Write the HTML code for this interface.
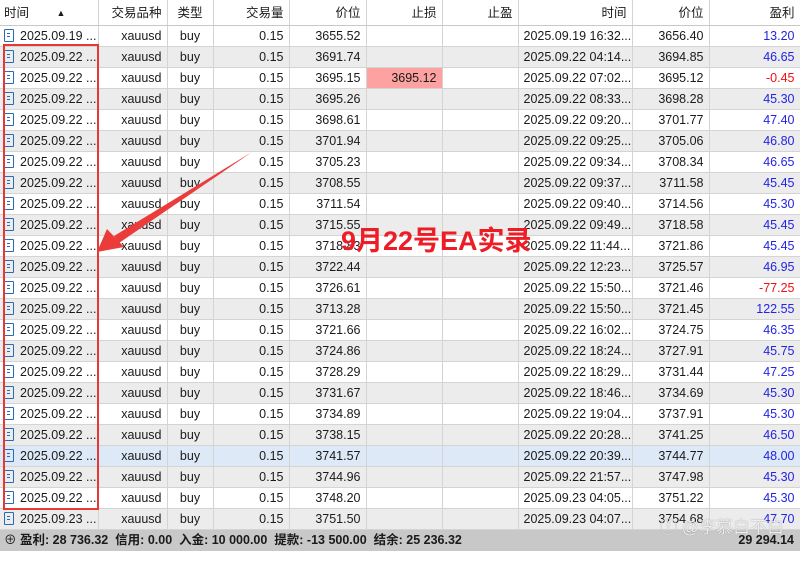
<!DOCTYPE html>
<html><head><meta charset="utf-8"><style>
body{margin:0;width:808px;height:567px;overflow:hidden;background:#fff;font-family:"Liberation Sans","Noto Sans CJK SC",sans-serif;font-size:12.5px;color:#1a1a1a;position:relative}
table{position:absolute;left:0;top:0;border-collapse:collapse;table-layout:fixed;width:800px}
td,th{height:20px;padding:0 5px;border-right:1px solid #d4d4d4;border-bottom:1px solid #d4d4d4;white-space:nowrap;overflow:hidden;text-align:right;font-weight:normal;line-height:20px}
th{height:25px;line-height:22px;background:#fff;border-right:1px solid #d4d4d4;border-bottom:1px solid #c8c8c8}
tr:nth-child(odd) td{background:#ececec}
tr.hl td{background:#dde9f6!important}
td.c{text-align:center}
td.l{text-align:left;padding-left:4px}
.i{display:inline-block;width:8px;height:11px;border:1px solid #2a6bb8;border-radius:1px;vertical-align:middle;margin:-2px 6px 0 0;position:relative}
.i:after{content:"";position:absolute;left:2px;top:3px;width:3px;height:1px;background:#2a6bb8;box-shadow:0 3px 0 #2a6bb8}
.p{color:#2323e6}.n{color:#f01010}
.sl{background:#fda1a1!important}
.foot{position:absolute;left:0;top:530px;width:800px;height:21px;background:#c8c8c8;font-weight:bold;font-size:12.5px;line-height:21px}
.sb{position:absolute;left:800px;top:0;width:8px;height:567px;background:#fff}
</style></head><body>
<table>
<colgroup><col width="98"><col width="69"><col width="46"><col width="76"><col width="77"><col width="76"><col width="76"><col width="114"><col width="77"><col width="91"></colgroup>
<tr><th style="text-align:left;padding-left:4px">时间 <span style="font-size:9px;margin-left:24px;vertical-align:1px">▲</span></th><th>交易品种</th><th style="text-align:center">类型</th><th>交易量</th><th>价位</th><th>止损</th><th>止盈</th><th>时间</th><th>价位</th><th>盈利</th></tr>
<tr><td class="l"><span class="i"></span>2025.09.19 ...</td><td>xauusd</td><td class="c">buy</td><td>0.15</td><td>3655.52</td><td></td><td></td><td>2025.09.19 16:32...</td><td>3656.40</td><td class="p">13.20</td></tr>
<tr><td class="l"><span class="i"></span>2025.09.22 ...</td><td>xauusd</td><td class="c">buy</td><td>0.15</td><td>3691.74</td><td></td><td></td><td>2025.09.22 04:14...</td><td>3694.85</td><td class="p">46.65</td></tr>
<tr><td class="l"><span class="i"></span>2025.09.22 ...</td><td>xauusd</td><td class="c">buy</td><td>0.15</td><td>3695.15</td><td class="sl">3695.12</td><td></td><td>2025.09.22 07:02...</td><td>3695.12</td><td class="n">-0.45</td></tr>
<tr><td class="l"><span class="i"></span>2025.09.22 ...</td><td>xauusd</td><td class="c">buy</td><td>0.15</td><td>3695.26</td><td></td><td></td><td>2025.09.22 08:33...</td><td>3698.28</td><td class="p">45.30</td></tr>
<tr><td class="l"><span class="i"></span>2025.09.22 ...</td><td>xauusd</td><td class="c">buy</td><td>0.15</td><td>3698.61</td><td></td><td></td><td>2025.09.22 09:20...</td><td>3701.77</td><td class="p">47.40</td></tr>
<tr><td class="l"><span class="i"></span>2025.09.22 ...</td><td>xauusd</td><td class="c">buy</td><td>0.15</td><td>3701.94</td><td></td><td></td><td>2025.09.22 09:25...</td><td>3705.06</td><td class="p">46.80</td></tr>
<tr><td class="l"><span class="i"></span>2025.09.22 ...</td><td>xauusd</td><td class="c">buy</td><td>0.15</td><td>3705.23</td><td></td><td></td><td>2025.09.22 09:34...</td><td>3708.34</td><td class="p">46.65</td></tr>
<tr><td class="l"><span class="i"></span>2025.09.22 ...</td><td>xauusd</td><td class="c">buy</td><td>0.15</td><td>3708.55</td><td></td><td></td><td>2025.09.22 09:37...</td><td>3711.58</td><td class="p">45.45</td></tr>
<tr><td class="l"><span class="i"></span>2025.09.22 ...</td><td>xauusd</td><td class="c">buy</td><td>0.15</td><td>3711.54</td><td></td><td></td><td>2025.09.22 09:40...</td><td>3714.56</td><td class="p">45.30</td></tr>
<tr><td class="l"><span class="i"></span>2025.09.22 ...</td><td>xauusd</td><td class="c">buy</td><td>0.15</td><td>3715.55</td><td></td><td></td><td>2025.09.22 09:49...</td><td>3718.58</td><td class="p">45.45</td></tr>
<tr><td class="l"><span class="i"></span>2025.09.22 ...</td><td>xauusd</td><td class="c">buy</td><td>0.15</td><td>3718.83</td><td></td><td></td><td>2025.09.22 11:44...</td><td>3721.86</td><td class="p">45.45</td></tr>
<tr><td class="l"><span class="i"></span>2025.09.22 ...</td><td>xauusd</td><td class="c">buy</td><td>0.15</td><td>3722.44</td><td></td><td></td><td>2025.09.22 12:23...</td><td>3725.57</td><td class="p">46.95</td></tr>
<tr><td class="l"><span class="i"></span>2025.09.22 ...</td><td>xauusd</td><td class="c">buy</td><td>0.15</td><td>3726.61</td><td></td><td></td><td>2025.09.22 15:50...</td><td>3721.46</td><td class="n">-77.25</td></tr>
<tr><td class="l"><span class="i"></span>2025.09.22 ...</td><td>xauusd</td><td class="c">buy</td><td>0.15</td><td>3713.28</td><td></td><td></td><td>2025.09.22 15:50...</td><td>3721.45</td><td class="p">122.55</td></tr>
<tr><td class="l"><span class="i"></span>2025.09.22 ...</td><td>xauusd</td><td class="c">buy</td><td>0.15</td><td>3721.66</td><td></td><td></td><td>2025.09.22 16:02...</td><td>3724.75</td><td class="p">46.35</td></tr>
<tr><td class="l"><span class="i"></span>2025.09.22 ...</td><td>xauusd</td><td class="c">buy</td><td>0.15</td><td>3724.86</td><td></td><td></td><td>2025.09.22 18:24...</td><td>3727.91</td><td class="p">45.75</td></tr>
<tr><td class="l"><span class="i"></span>2025.09.22 ...</td><td>xauusd</td><td class="c">buy</td><td>0.15</td><td>3728.29</td><td></td><td></td><td>2025.09.22 18:29...</td><td>3731.44</td><td class="p">47.25</td></tr>
<tr><td class="l"><span class="i"></span>2025.09.22 ...</td><td>xauusd</td><td class="c">buy</td><td>0.15</td><td>3731.67</td><td></td><td></td><td>2025.09.22 18:46...</td><td>3734.69</td><td class="p">45.30</td></tr>
<tr><td class="l"><span class="i"></span>2025.09.22 ...</td><td>xauusd</td><td class="c">buy</td><td>0.15</td><td>3734.89</td><td></td><td></td><td>2025.09.22 19:04...</td><td>3737.91</td><td class="p">45.30</td></tr>
<tr><td class="l"><span class="i"></span>2025.09.22 ...</td><td>xauusd</td><td class="c">buy</td><td>0.15</td><td>3738.15</td><td></td><td></td><td>2025.09.22 20:28...</td><td>3741.25</td><td class="p">46.50</td></tr>
<tr class="hl"><td class="l"><span class="i"></span>2025.09.22 ...</td><td>xauusd</td><td class="c">buy</td><td>0.15</td><td>3741.57</td><td></td><td></td><td>2025.09.22 20:39...</td><td>3744.77</td><td class="p">48.00</td></tr>
<tr><td class="l"><span class="i"></span>2025.09.22 ...</td><td>xauusd</td><td class="c">buy</td><td>0.15</td><td>3744.96</td><td></td><td></td><td>2025.09.22 21:57...</td><td>3747.98</td><td class="p">45.30</td></tr>
<tr><td class="l"><span class="i"></span>2025.09.22 ...</td><td>xauusd</td><td class="c">buy</td><td>0.15</td><td>3748.20</td><td></td><td></td><td>2025.09.23 04:05...</td><td>3751.22</td><td class="p">45.30</td></tr>
<tr><td class="l"><span class="i"></span>2025.09.23 ...</td><td>xauusd</td><td class="c">buy</td><td>0.15</td><td>3751.50</td><td></td><td></td><td>2025.09.23 04:07...</td><td>3754.68</td><td class="p">47.70</td></tr>
</table>
<div class="foot"><span style="font-weight:normal;margin-left:4px">⊕</span> 盈利: 28 736.32&nbsp; 信用: 0.00&nbsp; 入金: 10 000.00&nbsp; 提款: -13 500.00&nbsp; 结余: 25 236.32<span style="position:absolute;right:6px;top:0">29 294.14</span></div>
<div class="sb"></div>
<div style="position:absolute;left:3px;top:44px;width:92px;height:462px;border:2px solid #e53935"></div>
<svg style="position:absolute;left:0;top:0" width="808" height="567">
<polygon points="252,152 114,236 119,243" fill="#ec3b3b"/>
<polygon points="97,252 107,229 124,247" fill="#ec3b3b"/>
</svg>
<div style="position:absolute;left:341px;top:219px;font-size:27px;font-weight:bold;color:#ee1c25;font-family:'Liberation Sans','Noto Sans CJK SC',sans-serif">9月22号EA实录</div>
<div style="position:absolute;left:660px;top:513px;font-size:17px;color:rgba(255,255,255,0.85);text-shadow:0 0 1px #777">ⓕ @李慕白不白</div>
</body></html>
